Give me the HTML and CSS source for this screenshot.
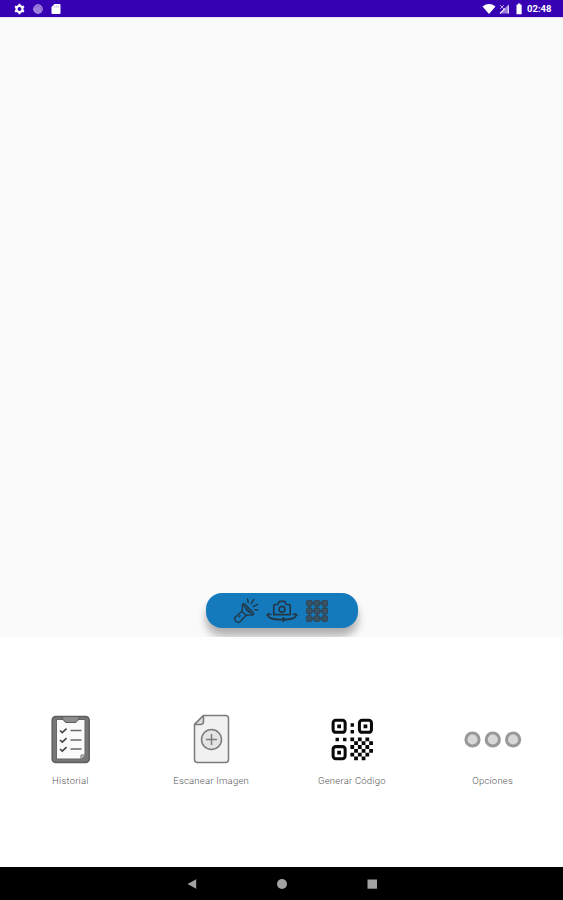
FILE: index.html
```html
<!DOCTYPE html>
<html lang="es">
<head>
<meta charset="utf-8">
<title>Escáner</title>
<link rel="stylesheet" href="styles.css">
</head>
<body>
<header class="status">
  <svg class="status-left" width="48" height="12" viewBox="0 0 48 12">
    <circle cx="5.5" cy="6" r="3" fill="none" stroke="#fff" stroke-width="2.2"/>
    <path d="M5.5.8v2M5.5 9.2v2M1 3.4l1.7 1M8.3 7.6l1.7 1M1 8.6l1.7-1M8.3 4.4l1.7-1" stroke="#fff" stroke-width="2"/>
    <circle cx="24" cy="6" r="4.3" fill="#9c7ddb" stroke="#b39be5"/>
    <path d="M20.5 4.5a4 4 0 0 1 6.5 5" fill="none" stroke="#8a66d2" stroke-width="1.3"/>
    <path d="M40.5 1h5q1 0 1 1v8q0 1-1 1h-7q-1 0-1-1V4z" fill="#fff"/>
    <path d="M40.2 3v1.600M42.2 2.400v2.200M44.2 2.400v2.200" stroke="#b8a0e8" stroke-width=".8"/>
  </svg>
  <div class="status-right">
    <svg width="41" height="12" viewBox="0 0 41 12">
      <path d="M.5 3.400Q7-1.200 13.500 3.400L7 11z" fill="#fff"/>
      <path d="M27 1v9.500h-9.500z" fill="#9a7cdb"/>
      <path d="M26.300 3v7.500M18 10.500l5-5" stroke="#e4dbf7" stroke-width="1.200"/>
      <path d="M18 2l4 4M22 2l-4 4" stroke="#b9a3e8"/>
      <path d="M34.500 1.800h1.300V.6h2.600v1.200h1.300V11.200h-5.200z" fill="#fff"/>
    </svg>
    <span class="clock">02:48</span>
  </div>
</header>
<main class="preview">
  <div class="tools">
    <svg width="26" height="26" viewBox="0 0 26 26" fill="none" stroke="#233746" stroke-width="1.400" stroke-linejoin="round" stroke-linecap="round">
      <path d="M9.500 6.500q1-1.700 2.600-.2l8 8.300q1.300 1.600-.3 2.300l-6.600.3-6 6.400q-2 1.800-4.400-.4-2.200-2.400-.4-4.200l6.600-5.800z"/>
      <path d="M9.500 6.500l10.300 10.400M8.800 13.300l4.400 3.900M13 11.300l3 3M6 18.800l1-1"/>
      <path d="M14.500 1l.8 3.500M21 1.500l-3 4.300M24.500 6.300l-4.300 2.300M21.800 11.800l3 .3"/>
    </svg>
    <svg width="32" height="26" viewBox="0 0 32 26" fill="none" stroke="#233746" stroke-width="1.700" stroke-linejoin="round" stroke-linecap="round">
      <path d="M7.800 16.700V7.800q0-1.300 1.300-1.300h2.700l1.500-3.200h5.400l1.500 3.200h2.700q1.300 0 1.300 1.300v8.900z"/>
      <circle cx="16" cy="11.200" r="2.900"/>
      <path d="M2.500 15.800q-2.500 5.700 13.500 5.800 16 0 13.500-5.800M1.200 17.200l1.300-1.400 2.200.7M30.800 17.200l-1.300-1.400-2.200.7M17 20l2 1.600-2 1.600"/>
    </svg>
    <svg class="grid-icon" width="24" height="26" viewBox="0 0 24 26" fill="#3a5364" stroke="#304859" stroke-width="1.200">
      <path d="M3 5h18M3 13h18M3 20.500h18M4.500 3v19M12 3v19M19.500 3v19" stroke-width="2"/>
      <rect x="1.600" y="2.500" width="5.400" height="5.400" rx="1.200"/><rect x="9.300" y="2.500" width="5.400" height="5.400" rx="1.200"/><rect x="17" y="2.500" width="5.400" height="5.400" rx="1.200"/>
      <rect x="1.600" y="10.200" width="5.400" height="5.400" rx="1.200"/><rect x="9.300" y="10.200" width="5.400" height="5.400" rx="1.200"/><rect x="17" y="10.200" width="5.400" height="5.400" rx="1.200"/>
      <rect x="1.600" y="17.900" width="5.400" height="5.400" rx="1.200"/><rect x="9.300" y="17.900" width="5.400" height="5.400" rx="1.200"/><rect x="17" y="17.900" width="5.400" height="5.400" rx="1.200"/>
    </svg>
  </div>
</main>
<section class="actions">
  <div class="action">
    <svg width="60" height="60" viewBox="0 0 60 60">
      <rect x="12.200" y="7.500" width="37" height="46" rx="3.500" fill="#777" stroke="#5e5e5e" stroke-width="1.500"/>
      <path d="M16.500 10.500h28.500v35.500l-4 4H16.500z" fill="#fafafa" stroke="#666"/>
      <path d="M41 50v-4h4" fill="#ccc" stroke="#777"/>
      <path d="M22.500 7.500h16.500v2.500l-3 3.500H25.500l-3-3.500z" fill="#8c8c8c" stroke="#5e5e5e"/>
      <path d="M20 21.500l2.300 2.200 4.200-4M20 31l2.300 2.200 4.200-4M20 40l2.300 2.200 4.200-4" fill="none" stroke="#444" stroke-width="1.600"/>
      <path d="M30.500 21.500h11M30.500 31h11M30.500 40h11" stroke="#686868" stroke-width="1.700"/>
    </svg>
    <span class="label">Historial</span>
  </div>
  <div class="action">
    <svg width="60" height="60" viewBox="0 0 60 60" stroke="#7c7c7c" stroke-width="1.500" stroke-linejoin="round">
      <path d="M22.500 6.500h22q3 0 3 3v41q0 3-3 3h-28q-3 0-3-3V15.500z" fill="#f1f1f1"/>
      <path d="M22.500 6.500v6q0 3-3 3h-6z" fill="#ddd"/>
      <circle cx="30.500" cy="30.500" r="10" fill="#e4e4e4"/>
      <path d="M30.500 25v11M25 30.500h11"/>
    </svg>
    <span class="label">Escanear Imagen</span>
  </div>
  <div class="action">
    <svg width="60" height="60" viewBox="0 0 60 60">
      <g transform="translate(9.600 9.800) scale(3.760)">
        <g fill="none" stroke="#080808" stroke-width=".8">
          <rect x=".4" y=".4" width="3.200" height="3.200" rx=".7"/>
          <rect x="7.400" y=".4" width="3.200" height="3.200" rx=".7"/>
          <rect x=".4" y="7.400" width="3.200" height="3.200" rx=".7"/>
        </g>
        <path fill="#080808" d="M1.500 1.500h1v1h-1zM8.500 1.500h1v1h-1zM1.500 8.500h1v1h-1zM5.050 1.200h.9v.9h-.9zM5.050 3h.9v.9h-.9zM1.050 5.050h.9v.9h-.9zM3.050 5.050h.9v.9h-.9z"/>
        <path fill="#080808" d="M5 5h1v1h-1zM7 5h1v1h-1zM9 5h1v1h-1zM6 6h1v1h-1zM8 6h1v1h-1zM10 6h1v1h-1zM5 7h1v1h-1zM7 7h1v1h-1zM9 7h1v1h-1zM6 8h1v1h-1zM8 8h1v1h-1zM10 8h1v1h-1zM5 9h1v1h-1zM7 9h1v1h-1zM9 9h1v1h-1zM6 10h1v1h-1zM8 10h1v1h-1z"/>
      </g>
    </svg>
    <span class="label">Generar Código</span>
  </div>
  <div class="action">
    <svg width="60" height="60" viewBox="0 0 60 60" fill="#d8d8d8" stroke="#999" stroke-width="3">
      <circle cx="9.500" cy="30.500" r="6.600"/><circle cx="29.800" cy="30.500" r="6.600"/><circle cx="50.100" cy="30.500" r="6.600"/>
    </svg>
    <span class="label">Opciones</span>
  </div>
</section>
<nav class="navbar">
  <svg width="12" height="12" viewBox="0 0 12 12"><path d="M1.500 6L10.200 1.200v9.600z"/></svg>
  <svg width="12" height="12" viewBox="0 0 12 12"><circle cx="6" cy="6" r="5"/></svg>
  <svg width="12" height="12" viewBox="0 0 12 12"><path d="M1.500 1.500h9.500v9.200H1.500z"/></svg>
</nav>
</body>
</html>
```
FILE: styles.css
```css
* {
  box-sizing: border-box;
}

body {
  margin: 0;
  height: 900px;
  display: flex;
  flex-direction: column;
  overflow: hidden;
  background: #fff;
  font-family: Roboto, sans-serif;
}

svg {
  display: block;
  flex: none;
}

.status {
  height: 17px;
  flex: none;
  display: flex;
  justify-content: space-between;
  align-items: center;
  padding: 1px 10px 0 14px;
  background: #3700b3;
}

.status-right {
  display: flex;
  align-items: center;
  gap: 4px;
}

.clock {
  width: 26px;
  color: #fff;
  font-size: 9.5px;
  font-weight: 700;
  line-height: 12px;
  white-space: nowrap;
}

.preview {
  height: 620px;
  flex: none;
  display: flex;
  justify-content: center;
  align-items: flex-end;
  padding-bottom: 9px;
  overflow: hidden;
  background: #fafafa;
  border-top: 1px solid #e6e0f2;
}

.tools {
  width: 152px;
  height: 35px;
  display: flex;
  align-items: center;
  justify-content: center;
  gap: 7px;
  padding-right: 2px;
  border-radius: 16px;
  background: #147abb;
  box-shadow: 0 8px 9px rgba(0, 0, 0, 0.3);
}

.actions {
  height: 230px;
  flex: none;
  display: grid;
  grid-template-columns: repeat(4, 1fr);
  padding-top: 72px;
  background: #fff;
}

.action {
  display: flex;
  flex-direction: column;
  align-items: center;
}

.label {
  margin-top: 5px;
  color: #555;
  font-size: 9.5px;
  font-weight: 300;
  line-height: 13px;
  letter-spacing: 0.22px;
  white-space: nowrap;
}

.navbar {
  height: 33px;
  flex: none;
  display: flex;
  justify-content: center;
  align-items: center;
  gap: 78px;
  background: #000;
  fill: #a3a3a3;
}
```
